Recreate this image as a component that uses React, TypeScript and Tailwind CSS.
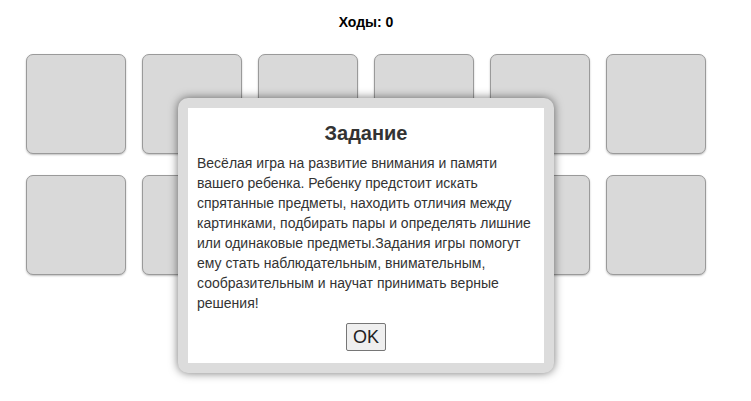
import React from "react";

const lines = [
  "Весёлая игра на развитие внимания и памяти",
  "вашего ребенка. Ребенку предстоит искать",
  "спрятанные предметы, находить отличия между",
  "картинками, подбирать пары и определять лишние",
  "или одинаковые предметы.Задания игры помогут",
  "ему стать наблюдательным, внимательным,",
  "сообразительным и научат принимать верные",
  "решения!",
];

export default function App() {
  return (
    <div
      className="relative w-[732px] h-[401px] bg-white text-[#333]"
      style={{ fontFamily: '"Liberation Sans", Arial, sans-serif' }}
    >
      <div className="pt-[13px] text-center text-[14px] leading-[18px] font-bold text-black">
        Ходы: 0
      </div>
      <div className="mt-[23px] ml-[26px] grid grid-cols-[repeat(6,100px)] gap-x-[16px] gap-y-[21px]">
        {Array.from({ length: 12 }).map((_, i) => (
          <div
            key={i}
            className="w-[100px] h-[100px] rounded-[7px] border border-[#9a9a9a] bg-[#d9d9d9] shadow-[0_1px_2px_rgba(0,0,0,0.25)]"
          />
        ))}
      </div>
      <div className="absolute left-[178px] top-[98px] w-[376px] rounded-[10px] bg-[#dcdcdc] p-[10px] shadow-[0_0_10px_rgba(0,0,0,0.55)]">
        <div className="bg-white px-[9px] pt-[10px] pb-[12px]">
          <h2 className="text-center text-[20px] leading-[30px] font-bold text-[#333]">
            Задание
          </h2>
          <p className="mt-[5px] text-[14px] leading-[20px] text-[#333] whitespace-nowrap">
            {lines.map((l, i) => (
              <React.Fragment key={i}>
                {l}
                {i < lines.length - 1 && <br />}
              </React.Fragment>
            ))}
          </p>
          <div className="mt-[10px] flex justify-center">
            <button className="h-[28px] px-[6px] rounded-[2px] border border-[#767676] bg-[#efefef] text-[18px] leading-[20px] text-[#222]">
              OK
            </button>
          </div>
        </div>
      </div>
    </div>
  );
}
